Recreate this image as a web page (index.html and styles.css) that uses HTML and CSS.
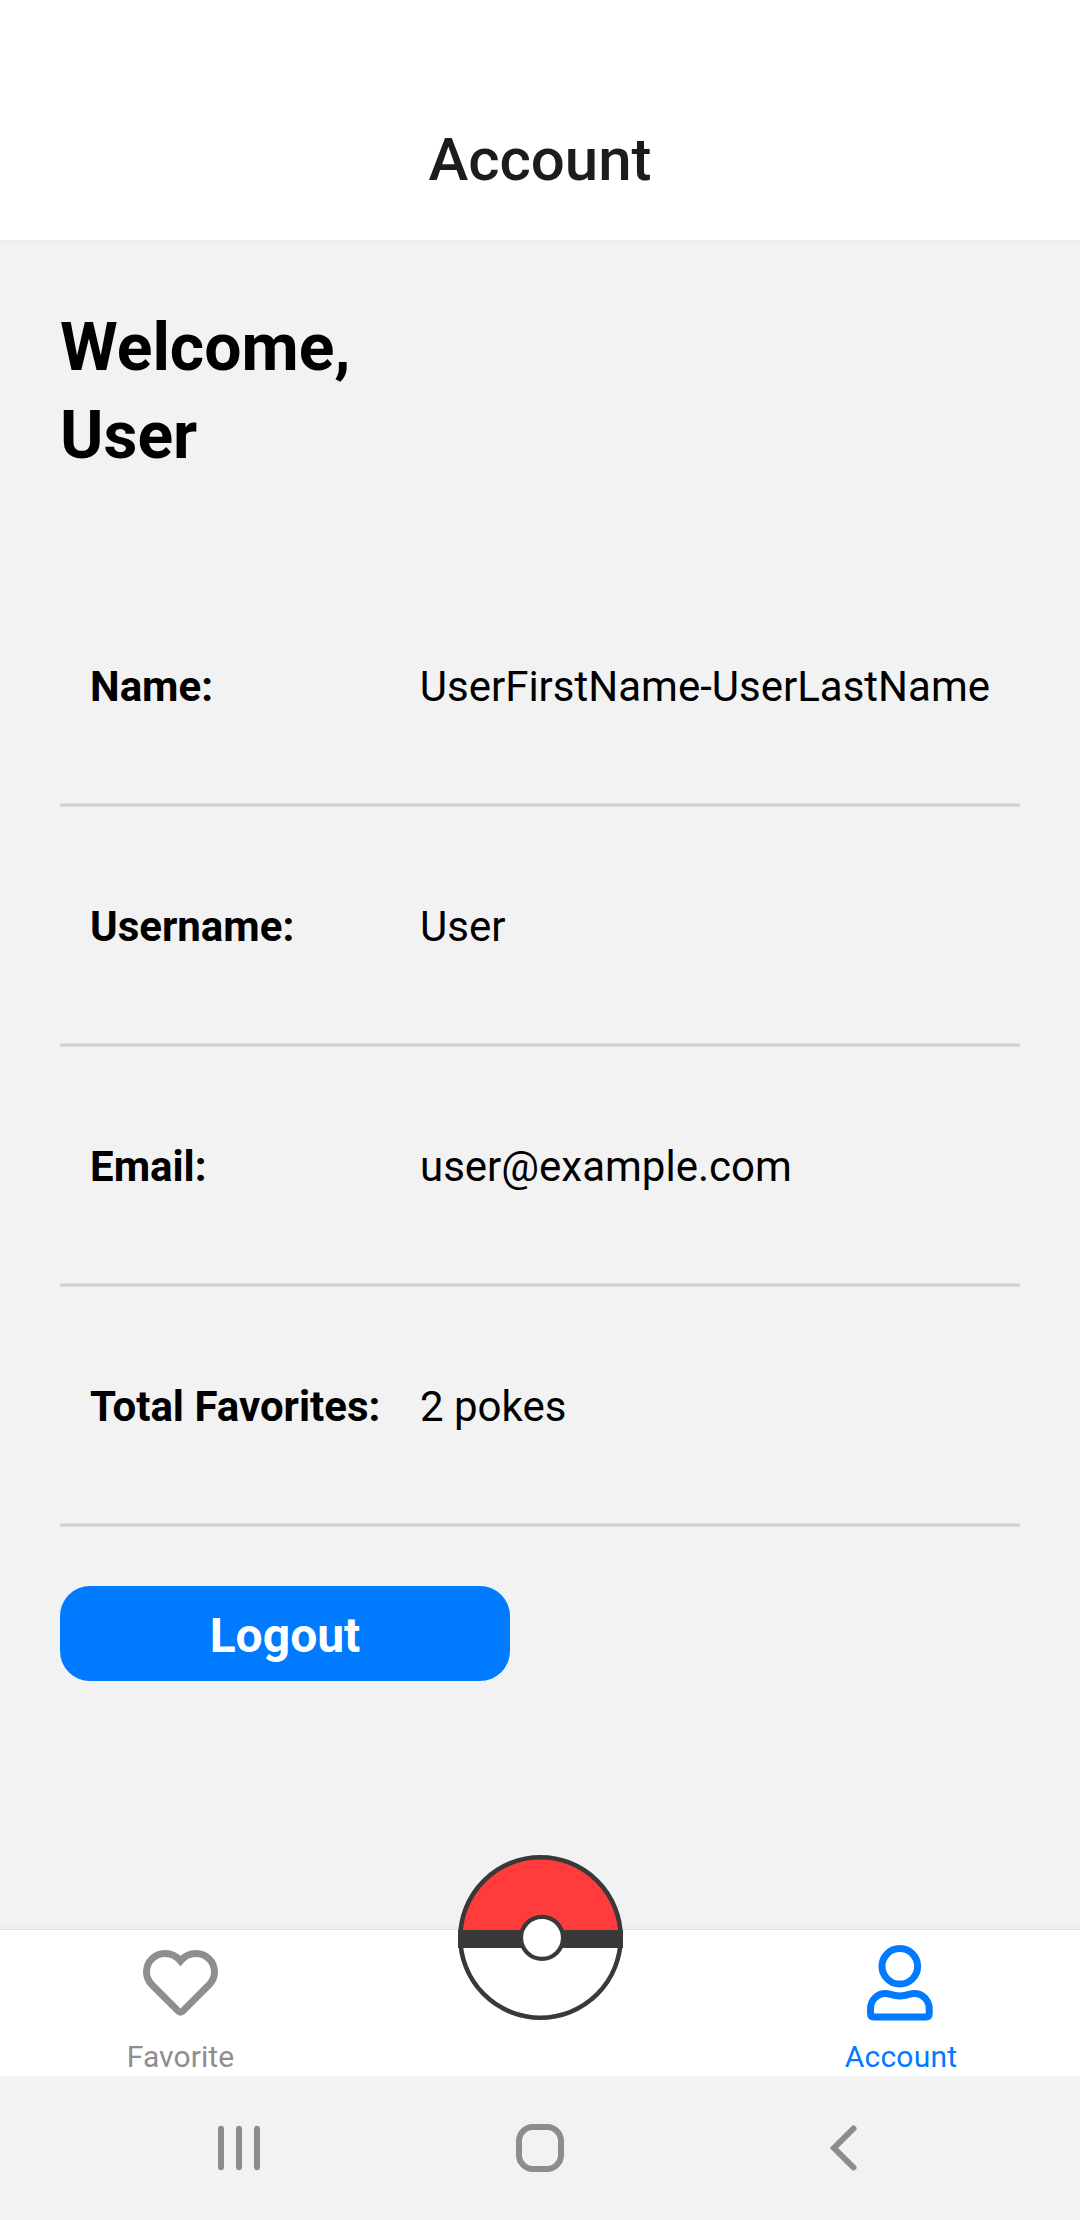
FILE: index.html
```html
<!DOCTYPE html>
<html lang="en">
<head>
<meta charset="utf-8">
<title>Account</title>
<link rel="stylesheet" href="styles.css">
</head>
<body>
<div class="screen">
  <header class="header"><h1 class="title">Account</h1></header>
  <main class="content">
    <h2 class="welcome">Welcome,<br>User</h2>
    <dl class="details">
      <div class="row"><dt class="label">Name:</dt><dd class="value">UserFirstName-UserLastName</dd></div>
      <div class="row"><dt class="label">Username:</dt><dd class="value">User</dd></div>
      <div class="row"><dt class="label">Email:</dt><dd class="value">user@example.com</dd></div>
      <div class="row"><dt class="label">Total Favorites:</dt><dd class="value">2 pokes</dd></div>
    </dl>
    <button class="logout" type="button">Logout</button>
  </main>
  <nav class="tabs">
    <a class="tab">
      <svg class="tab-icon" viewBox="0 0 84 84" fill="none" stroke="currentColor" stroke-width="7"><path d="M40.300 71.100L13.900 44.700C10.500 41.300 8.500 36.800 8.500 32C8.500 21.500 17 13.500 27 13.500C33 13.500 38.800 16.400 42.500 21C46.200 16.400 52 13.500 58 13.500C68 13.500 76.500 21.500 76.500 32C76.500 36.800 74.500 41.300 71.100 44.700L44.700 71.100Q42.500 73.300 40.300 71.100Z"/></svg>
      <span class="tab-label">Favorite</span>
    </a>
    <a class="tab">
      <svg class="ball" viewBox="0 0 165 165">
        <path fill="#ff3b3b" d="M2 82.500a80.500 80.500 0 0 1 161 0z"/>
        <path fill="#fff" d="M2 82.500a80.500 80.500 0 0 0 161 0z"/>
        <circle cx="82.500" cy="82.500" r="80.200" fill="none" stroke="#393939" stroke-width="4.600"/>
        <path fill="#393939" d="M0 75h165v18H0z"/>
        <circle cx="84" cy="82.800" r="21" fill="#fff" stroke="#393939" stroke-width="4.200"/>
      </svg>
    </a>
    <a class="tab active">
      <svg class="tab-icon" viewBox="0 0 84 84" fill="none" stroke="currentColor" stroke-width="7" stroke-linejoin="round"><circle cx="41.800" cy="26.300" r="17.800"/><path d="M12.500 73.500V68.500A15 15 0 0 1 27.500 53.500C32 53.500 34 55.900 41.800 55.900S51.600 53.500 56.200 53.500A15 15 0 0 1 71.200 68.500V73.500Q71.200 76.900 67.800 76.900H15.900Q12.500 76.900 12.500 73.500Z"/></svg>
      <span class="tab-label">Account</span>
    </a>
  </nav>
  <footer class="system">
    <svg class="system-icon" viewBox="0 0 48 48" fill="none" stroke="currentColor" stroke-width="6" stroke-linecap="round"><path d="M6 4.800v38.400M24 4.800v38.400M42 4.800v38.400"/></svg>
    <svg class="system-icon" viewBox="0 0 48 48" fill="none" stroke="currentColor" stroke-width="6"><rect x="3" y="3" width="42" height="42" rx="14"/></svg>
    <svg class="system-icon" viewBox="0 0 48 48" fill="none" stroke="currentColor" stroke-width="6" stroke-linecap="round"><path d="M36.500 4.500L17 24L36.500 43.500"/></svg>
  </footer>
</div>
</body>
</html>
```
FILE: styles.css
```css
* { box-sizing: border-box; margin: 0; padding: 0; }
body { font-family: Roboto, "Noto Sans", sans-serif; background: #f2f2f2; color: #000; }
.screen { display: flex; flex-direction: column; width: 1080px; height: 2220px; overflow: hidden; background: #f2f2f2; }
.header { height: 240px; padding-top: 80px; background: #fff; box-shadow: 0 1px 12px rgba(0, 0, 0, 0.04); }
.title { font-size: 60px; font-weight: 500; line-height: 160px; text-align: center; color: #1c1c1e; }
.content { flex: 1; padding: 64px 60px 0; }
.welcome { font-size: 66px; font-weight: 700; line-height: 88px; }
.details { padding-top: 87px; }
.row { display: flex; height: 240px; padding: 0 30px; align-items: center; font-size: 42px; line-height: 50px; background: linear-gradient(#e0e0e0 1px, #d0d0d0 1px 3px, #e0e0e0 3px) bottom / 100% 4px no-repeat; }
.label { width: 330px; font-weight: 700; }
.value { white-space: nowrap; }
.logout { display: block; width: 450px; height: 95px; margin-top: 59px; padding-top: 4px; border: 0; border-radius: 30px; background: #007aff; color: #fff; font: 700 48px/91px Roboto, sans-serif; }
.tabs { display: flex; height: 146px; background: #fff; box-shadow: 0 -1px 0 #e2e2e2, 0 -2px 8px rgba(0, 0, 0, 0.04); }
.tab { display: flex; flex: 1; flex-direction: column; align-items: center; padding-top: 10px; color: #8e8e8f; }
.tab.active { color: #007aff; }
.tab-icon { width: 84px; height: 84px; }
.tab-label { margin-top: 15px; padding-left: 1px; font-size: 30px; line-height: 36px; letter-spacing: 0.1px; }
.active .tab-label { padding-left: 2px; letter-spacing: 0.2px; }
.ball { width: 165px; height: 165px; margin-top: -85px; flex: none; }
.system { position: relative; display: flex; height: 144px; padding: 0 215px; justify-content: space-between; align-items: center; background: #f2f2f2; color: #8c8c8c; }
.system-icon { width: 48px; height: 48px; }
```
